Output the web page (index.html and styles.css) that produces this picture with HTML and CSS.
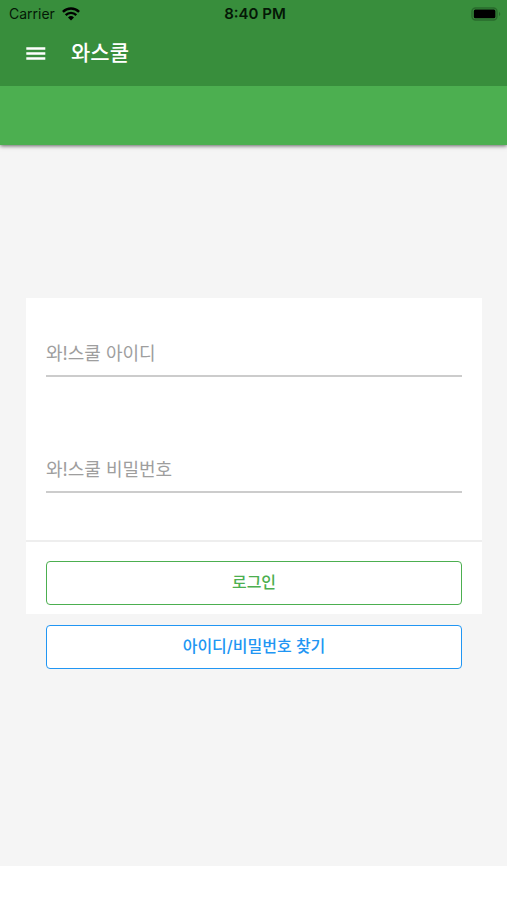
FILE: index.html
```html
<!DOCTYPE html>
<html lang="ko">
<head>
<meta charset="utf-8">
<meta name="viewport" content="width=device-width, initial-scale=1">
<title>와스쿨</title>
<link rel="stylesheet" href="styles.css">
</head>
<body>
<header class="header">
  <div class="status">
    <div class="carrier">
      <span>Carrier</span>
      <svg class="wifi" viewBox="0 0 18 14" aria-hidden="true">
        <path d="M.9 4.800a11.600 11.600 0 0 1 16.200 0M3.700 8.100a7.500 7.500 0 0 1 10.600 0" fill="none" stroke="currentColor" stroke-width="2.4"/>
        <path d="M9 13.500 6 10.500a4.300 4.300 0 0 1 6 0z" fill="currentColor"/>
      </svg>
    </div>
    <time class="clock">8:40 PM</time>
    <svg class="battery" viewBox="0 0 30 14" aria-hidden="true">
      <rect x="1" y="1" width="25" height="12" rx="3.5" fill="none" stroke="#296b2c" stroke-width="1.4"/>
      <rect x="2.8" y="2.6" width="21.6" height="8.6" rx="1.5" fill="#000"/>
      <path d="M28 5a2.2 2.2 0 0 1 0 4z" fill="#296b2c"/>
    </svg>
  </div>
  <div class="appbar">
    <button class="menu" type="button" aria-label="메뉴">
      <svg viewBox="0 0 20 14" aria-hidden="true"><path d="M.3 .3h19v2.400H.3zM.3 5.300h19v2.400H.3zM.3 10.300h19v2.400H.3z" fill="currentColor"/></svg>
    </button>
    <h1 class="title">와스쿨</h1>
  </div>
  <div class="toolbar"></div>
</header>
<main class="main">
  <form class="login">
    <div class="card">
      <div class="fields">
        <input class="field" type="text" placeholder="와!스쿨 아이디" aria-label="와!스쿨 아이디">
        <input class="field" type="password" placeholder="와!스쿨 비밀번호" aria-label="와!스쿨 비밀번호">
      </div>
      <div class="actions">
        <button class="button button-login" type="submit">로그인</button>
      </div>
    </div>
    <div class="find">
      <button class="button button-find" type="button">아이디/비밀번호 찾기</button>
    </div>
  </form>
</main>
</body>
</html>
```
FILE: styles.css
```css
* {
  box-sizing: border-box;
}

body {
  display: flex;
  flex-direction: column;
  min-height: 100vh;
  margin: 0;
  padding-bottom: 34px;
  background: #fff;
  font-family: Inter, "Noto Sans CJK KR", sans-serif;
}

.header {
  position: relative;
  background: #388e3c;
  box-shadow: 0 1px 4px rgba(0, 0, 0, 0.6);
}

.status {
  display: grid;
  grid-template-columns: 1fr auto 1fr;
  align-items: center;
  height: 27px;
  padding: 0 6px 0 9px;
  color: #041806;
  font-size: 14px;
}

.carrier {
  display: flex;
  align-items: center;
  gap: 7px;
}

.wifi {
  width: 18px;
  height: 14px;
  color: #000;
}

.clock {
  font-size: 15px;
  font-weight: 600;
}

.battery {
  justify-self: end;
  width: 30px;
  height: 14px;
}

.appbar {
  display: flex;
  align-items: center;
  gap: 25px;
  height: 59px;
  padding: 0 26px 8px;
  color: #fff;
}

.menu {
  display: flex;
  padding: 2px 0 0;
  border: 0;
  background: none;
  color: inherit;
}

.menu svg {
  width: 20px;
  height: 14px;
}

.title {
  margin: 0;
  font-size: 21px;
  font-weight: 500;
  line-height: 32px;
}

.toolbar {
  height: 59px;
  background: #4caf50;
}

.main {
  flex: 1;
  padding: 153px 25px 0 26px;
  background: #f5f5f5;
}

.login {
  margin: 0;
}

.card {
  background: #fff;
}

.fields {
  display: flex;
  flex-direction: column;
  gap: 68px;
  padding: 31px 20px 47px;
}

.field {
  width: 100%;
  height: 48px;
  padding: 2px 0 0;
  border: 0;
  border-bottom: 2px solid #ccc;
  border-radius: 0;
  outline: 0;
  background: none;
  color: #333;
  font-family: inherit;
  font-size: 18px;
}

.field::placeholder {
  color: #9e9e9e;
  opacity: 1;
}

.actions {
  padding: 19px 20px 9px;
  border-top: 2px solid #eee;
}

.find {
  padding: 11px 20px;
}

.button {
  display: block;
  width: 100%;
  height: 44px;
  padding: 0 0 4px;
  border: 1px solid currentColor;
  border-radius: 4px;
  background: #fff;
  font-family: inherit;
  font-size: 16px;
  font-weight: 500;
}

.button-login {
  color: #4caf50;
}

.button-find {
  color: #2196f3;
}
```
